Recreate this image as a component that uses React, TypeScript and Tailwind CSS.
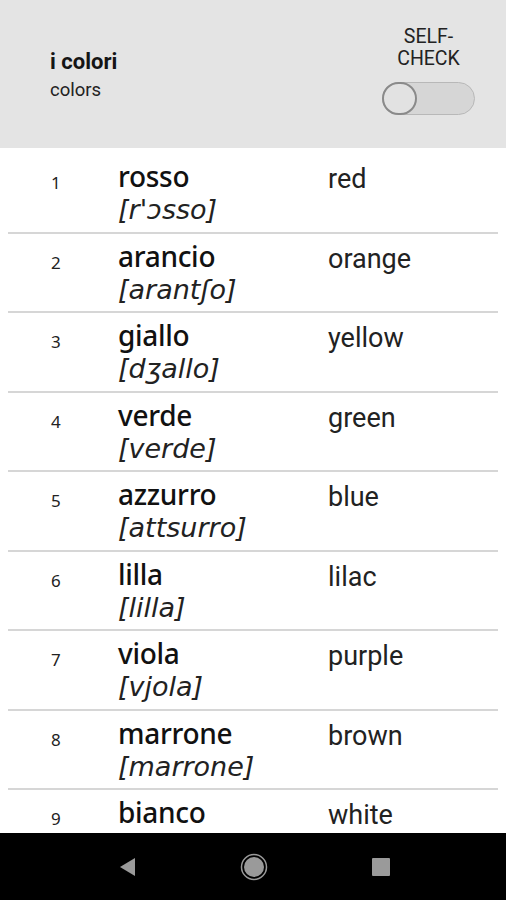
const words = [
  { n: 1, it: "rosso", ipa: "[r'ɔsso]", en: "red" },
  { n: 2, it: "arancio", ipa: "[arantʃo]", en: "orange" },
  { n: 3, it: "giallo", ipa: "[dʒallo]", en: "yellow" },
  { n: 4, it: "verde", ipa: "[verde]", en: "green" },
  { n: 5, it: "azzurro", ipa: "[attsurro]", en: "blue" },
  { n: 6, it: "lilla", ipa: "[lilla]", en: "lilac" },
  { n: 7, it: "viola", ipa: "[vjola]", en: "purple" },
  { n: 8, it: "marrone", ipa: "[marrone]", en: "brown" },
  { n: 9, it: "bianco", ipa: "[bjanko]", en: "white" },
];

function Row({ n, it, ipa, en }: (typeof words)[number]) {
  return (
    <div className="mx-2 flex h-[79.5px] shrink-0 border-b-2 border-[#d6d6d6]">
      <div className="w-[110px] pl-[43px] pt-[16px] text-[17px] text-[#222]">{n}</div>
      <div className="w-[210px] pt-[5px]">
        <div className="text-[28px] font-medium leading-[34px] tracking-[-0.3px] text-[#111]">{it}</div>
        <div className="text-[27px] italic leading-[34px] text-[#222] [font-family:'DejaVu_Sans',sans-serif]">
          {ipa}
        </div>
      </div>
      <div className="pt-[9px] text-[27px] leading-[32px] text-[#222] [font-family:Roboto,sans-serif]">{en}</div>
    </div>
  );
}

export default function App() {
  return (
    <div className="flex h-[900px] w-[506px] flex-col overflow-hidden bg-white [font-family:'Noto_Sans',sans-serif]">
      <div className="flex h-[148px] shrink-0 items-center justify-between bg-[#e4e4e4] pl-[50px] pr-[31px] [font-family:Roboto,sans-serif]">
        <div className="pt-[4px]">
          <div className="text-[22px] font-bold leading-[28px] text-[#151515]">i colori</div>
          <div className="text-[18.5px] leading-[28px] text-[#222]">colors</div>
        </div>
        <div className="flex flex-col items-center pb-[7px]">
          <div className="text-center text-[19.5px] leading-[22px] text-[#222]">
            SELF-
            <br />
            CHECK
          </div>
          <div className="relative mt-[12px] h-[33px] w-[93px] rounded-full border border-[#b8b8b8] bg-[#d6d6d6]">
            <div className="absolute left-[-1px] top-[-1px] h-[33px] w-[35px] rounded-full border-2 border-[#8a8a8a] bg-[#e2e2e2]" />
          </div>
        </div>
      </div>
      <div className="flex flex-1 flex-col overflow-hidden pt-[6px]">
        {words.map((w) => (
          <Row key={w.n} {...w} />
        ))}
      </div>
      <div className="flex h-[67px] shrink-0 items-center gap-[87px] bg-black pl-[107px]">
        <div className="flex w-[40px] justify-center">
          <svg width="16" height="20" viewBox="0 0 16 20">
            <polygon points="16,1 16,19 1,10" fill="#9a9a9a" />
          </svg>
        </div>
        <div className="flex w-[40px] justify-center">
          <svg width="28" height="28" viewBox="0 0 28 28">
            <circle cx="14" cy="14" r="12.5" fill="none" stroke="#9a9a9a" strokeWidth="1.5" />
            <circle cx="14" cy="14" r="10" fill="#9a9a9a" />
          </svg>
        </div>
        <div className="flex w-[40px] justify-center">
          <svg width="18" height="18" viewBox="0 0 18 18">
            <rect x="0" y="0" width="18" height="18" rx="1" fill="#9a9a9a" />
          </svg>
        </div>
      </div>
    </div>
  );
}
